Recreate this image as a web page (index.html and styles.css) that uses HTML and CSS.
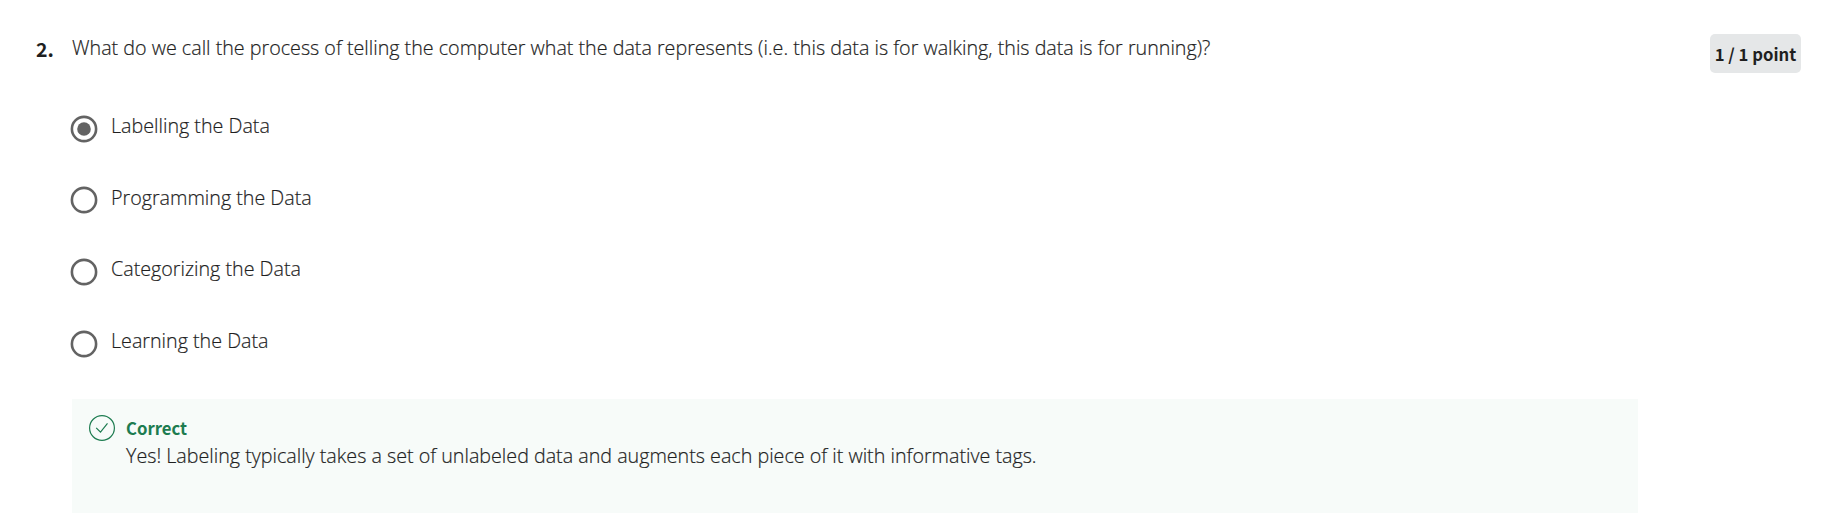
FILE: index.html
```html
<!DOCTYPE html>
<html lang="en">
<head>
<meta charset="utf-8">
<title>Question 2</title>
<link rel="stylesheet" href="styles.css">
</head>
<body>
<main class="question">
  <div class="number">2.</div>
  <div class="content">
    <p class="prompt">What do we call the process of telling the computer what the data represents (i.e. this data is for walking, this data is for running)?</p>
    <div class="options">
      <div class="option"><svg class="radio" viewBox="0 0 28 28"><circle class="ring" cx="14" cy="14" r="12.1"/><circle class="dot" cx="14" cy="14" r="6.8"/></svg><span>Labelling the Data</span></div>
      <div class="option"><svg class="radio" viewBox="0 0 28 28"><circle class="ring" cx="14" cy="14" r="12.1"/></svg><span>Programming the Data</span></div>
      <div class="option"><svg class="radio" viewBox="0 0 28 28"><circle class="ring" cx="14" cy="14" r="12.1"/></svg><span>Categorizing the Data</span></div>
      <div class="option"><svg class="radio" viewBox="0 0 28 28"><circle class="ring" cx="14" cy="14" r="12.1"/></svg><span>Learning the Data</span></div>
    </div>
    <section class="feedback">
      <svg class="check" viewBox="0 0 28 28"><circle cx="14" cy="14" r="12.4"/><path d="M8.2 13.8l4.3 4.4 7-8.8"/></svg>
      <div>
        <h2 class="verdict">Correct</h2>
        <p class="explanation">Yes! Labeling typically takes a set of unlabeled data and augments each piece of it with informative tags.</p>
      </div>
    </section>
  </div>
  <div class="points">1 / 1 point</div>
</main>
</body>
</html>
```
FILE: styles.css
```css
* { box-sizing: border-box; }
body { margin: 0; background: #fff; color: #1f1f1f; font: 400 19.7px/28px "Open Sans", sans-serif; }
p, h2 { margin: 0; }
.question { display: flex; align-items: flex-start; height: 529px; padding: 34px 43px 0 36px; }
.number { width: 36px; padding-top: 1px; font: 700 19.5px/28px "Noto Sans CJK JP", sans-serif; }
.content { width: 1566px; }
.prompt, .option, .explanation { font-weight: 300; white-space: nowrap; -webkit-text-stroke: 0.2px #1f1f1f; }
.options { padding-top: 50px; }
.option { display: flex; gap: 13px; height: 71.7px; }
.radio { width: 28px; height: 28px; margin: 2.6px 0 0 -2px; }
.ring { fill: none; stroke: #636363; stroke-width: 2.6; }
.dot { fill: #636363; }
.feedback { display: flex; gap: 10.5px; height: 114px; padding: 16px 15.5px; background: #f7fbf9; }
.check { width: 28px; height: 28px; margin-top: -0.5px; fill: none; stroke: #1d7c50; stroke-width: 1.2; }
.verdict { color: #1d7c50; font: 700 16.7px/27px "Noto Sans CJK JP", sans-serif; }
.points { margin-left: auto; width: 91px; height: 39px; border-radius: 5px; background: #e5e7e8; text-align: center; font: 700 16.7px/40px "Noto Sans CJK JP", sans-serif; white-space: nowrap; }
```
